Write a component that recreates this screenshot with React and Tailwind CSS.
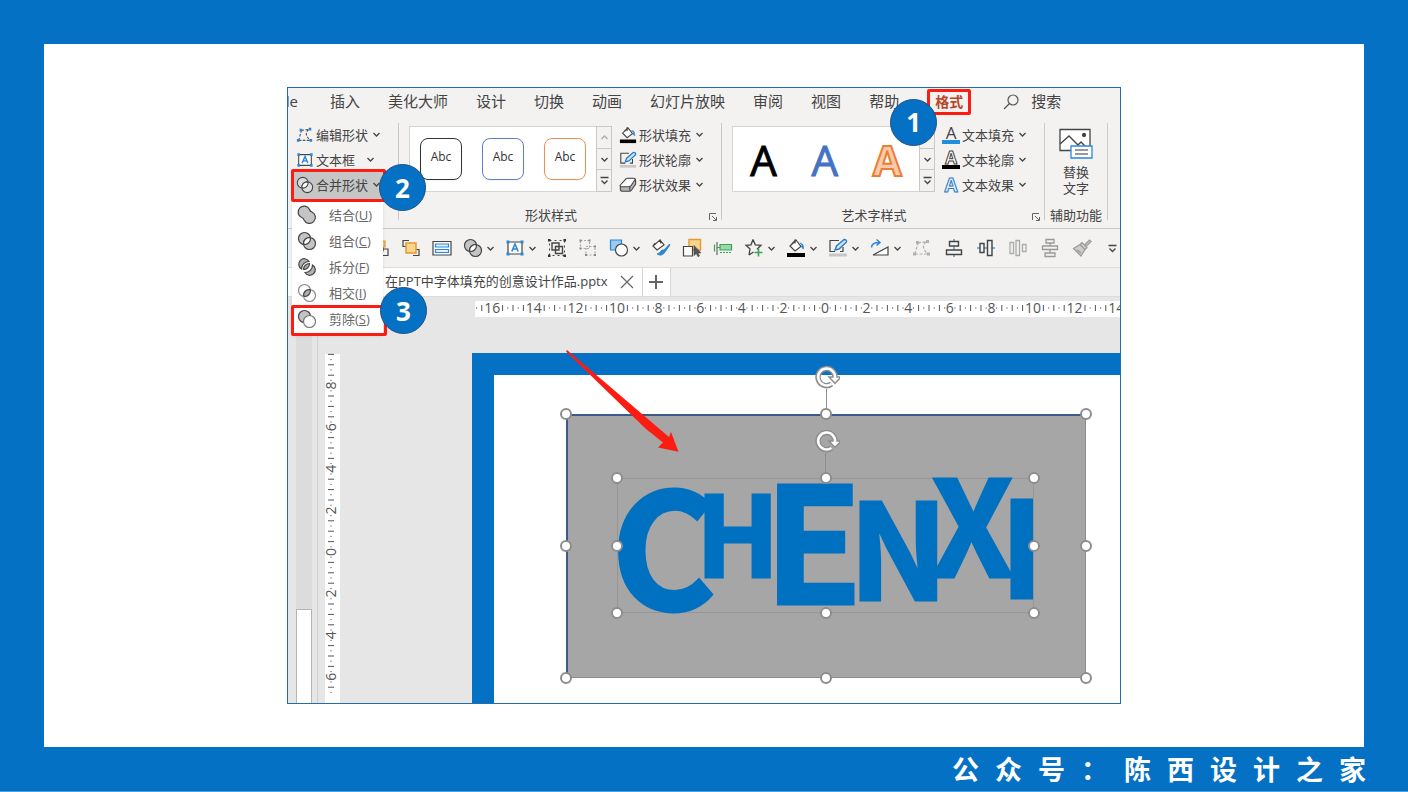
import React from 'react';
import clsx from 'clsx';

const tabs = ['插入', '美化大师', '设计', '切换', '动画', '幻灯片放映', '审阅', '视图', '帮助'];

const shapeStyles = ['border-[#333333]', 'border-[#5b80c9]', 'border-[#ec8f55]'];

const mergeItems = [
    { name: '结合', key: 'U', mode: 'union' },
    { name: '组合', key: 'C', mode: 'combine' },
    { name: '拆分', key: 'F', mode: 'fragment' },
    { name: '相交', key: 'I', mode: 'intersect' },
    { name: '剪除', key: 'S', mode: 'subtract' },
];

const Svg = ({ className = 'size-5', children }) => (
    <svg viewBox="0 0 20 20" className={clsx('shrink-0', className)} fill="none" stroke="#444" strokeWidth="1.2" aria-hidden="true">
        {children}
    </svg>
)

const Chevron = () => (
    <svg viewBox="0 0 9 9" className="size-[9px] shrink-0" fill="none" stroke="#444" strokeWidth="1.3" aria-hidden="true">
        <path d="M1.5 3l3 3 3-3" />
    </svg>
)

const MoreMark = () => (
    <svg viewBox="0 0 9 9" className="size-[9px] shrink-0" fill="none" stroke="#444" strokeWidth="1.3" aria-hidden="true">
        <path d="M0.5 1.5h8M1.5 4.5l3 3 3-3" />
    </svg>
)

const MergeIcon = ({ mode, className }) => (
    <Svg className={className}>
        {mode == 'union' && <path d="M12.5 4.5A6 6 0 1 0 4.5 12.5Q6.5 13 7 15A6 6 0 1 0 15 7Q13 6.5 12.5 4.5z" fill="#c4c4c4" />}
        {mode == 'combine' && <>
            <circle cx="7.5" cy="7.5" r="6" fill="#c4c4c4" />
            <circle cx="12.5" cy="12.5" r="6" fill="#c4c4c4" />
            <path d="M12.5 6.5A6 6 0 0 0 6.5 12.5L7.5 13.5A6 6 0 0 0 13.5 7.5z" fill="#fff" />
        </>}
        {mode == 'fragment' && <>
            <path d="M12 4.5A5.5 5.5 0 1 0 4.5 12A7.5 7.5 0 0 1 12 4.5z" fill="#b0b0b0" />
            <path d="M12.5 6.5A6 6 0 0 0 6.5 12.5A6 6 0 0 0 12.5 6.5z" fill="#b0b0b0" />
            <path d="M15.5 8A5.5 5.5 0 1 1 8 15.5A7.5 7.5 0 0 0 15.5 8z" fill="#b0b0b0" />
        </>}
        {mode == 'intersect' && <>
            <circle cx="7.5" cy="7.5" r="6" fill="#fff" stroke="#8a8a8a" />
            <circle cx="12.5" cy="12.5" r="6" fill="#fff" stroke="#8a8a8a" />
            <path d="M12.5 6.5A6 6 0 0 0 6.5 12.5L7.5 13.5A6 6 0 0 0 13.5 7.5z" fill="#b0b0b0" />
        </>}
        {mode == 'subtract' && <>
            <circle cx="7.5" cy="7.5" r="6" fill="#c4c4c4" />
            <circle cx="12.5" cy="12.5" r="6" fill="#fff" stroke="#777" />
        </>}
        {mode == 'outline' && <>
            <circle cx="7.5" cy="7.5" r="6" fill="#ddd" />
            <circle cx="12.5" cy="12.5" r="6" fill="#ddd" />
            <path d="M12.5 6.5A6 6 0 0 0 6.5 12.5L7.5 13.5A6 6 0 0 0 13.5 7.5z" fill="#fff" />
        </>}
    </Svg>
)

const EditPoints = ({ className, muted }) => (
    <Svg className={className}>
        <path d="M3 16L6 5M6 5q4-1 8-1M14 4q-6 5 2 12M3 16h13" stroke={muted ? '#b0b0b0' : '#555'} strokeDasharray="3 1.5" />
        <path d="M4 3h3v3H4zM14 2h3v3h-3zM1 14.5h3v3H1zM15 14.5h3v3h-3z" fill={muted ? '#b0b0b0' : '#2b88d8'} stroke="none" />
    </Svg>
)

const TextBox = ({ className }) => (
    <Svg className={className}>
        <path d="M3 4h14v12H3z" fill="#fff" />
        <path d="M6.8 13.5L10 6l3.2 7.5M8 11h4" stroke="#2b88d8" strokeWidth="1.6" />
        <path d="M1.5 2.5h3v3h-3zM15.5 2.5h3v3h-3zM1.5 14.5h3v3h-3zM15.5 14.5h3v3h-3z" fill="#2b88d8" stroke="none" />
    </Svg>
)

const Fill = ({ className }) => (
    <Svg className={className}>
        <path d="M10 2l5 6.5-6 4.5-5-5z" fill="#fff" />
        <path d="M9 1.5v4M10 2l-4 4" />
        <path d="M14 5q4 0 3.5 6q-2.5-1-1.5-4z" fill="#2b88d8" stroke="#2b88d8" strokeWidth="0.6" />
        <path d="M1 15h18v4H1z" fill="#000" stroke="none" />
    </Svg>
)

const Outline = ({ className }) => (
    <Svg className={className}>
        <path d="M11 2.5H2v11h5M15 9v4.5h-3" />
        <path d="M7 12l1.5-4L16 1.5q3 0 2.5 2.5L11 11z" fill="#cfe5f7" stroke="#2b7cc4" strokeWidth="1.4" />
        <path d="M1 15.5h18v3H1z" fill="#c8c8c8" stroke="none" />
    </Svg>
)

const Effect = ({ className }) => (
    <Svg className={className}>
        <path d="M8 3h8.5q2 0 2 2v4l-4.5 6.5q-1 1.5-2.5 1.5H4q-2.5 0-2.5-2v-3z" fill="#b5b5b5" />
        <path d="M7 4q1-1.5 2.5-1.5h7q2 0 1 2l-4 6q-1 1.5-2.5 1.5H3q-2.5 0-1.5-2z" fill="#fff" />
        <path d="M12 12v4.5" />
    </Svg>
)

const TextIcon = ({ kind }) => (
    <span className="flex w-[18px] shrink-0 flex-col items-center">
        <span className={clsx('text-[17px]',
            kind == 'fill' && 'leading-[14px] text-[#444]',
            kind == 'line' && 'leading-[14px] font-bold text-white [-webkit-text-stroke:1px_#444]',
            kind == 'effect' && 'text-[19px] leading-[18px] font-bold text-[#e3f1fb] [-webkit-text-stroke:1px_#2b7cc4]')}>A</span>
        {kind != 'effect' && <span className={clsx('h-1 w-full', kind == 'fill' ? 'bg-[#1e90dc]' : 'bg-black')} />}
    </span>
)

const toolsLeft = [
    { name: '下移一层', icon: <Svg><path d="M7 7h6v6H7z" fill="#fff" /><path d="M12 11h6v6.5h-6z" /><path d="M11 3h4v6h-4z" fill="#f9c36b" stroke="#e39a32" /></Svg> },
    { name: '上移一层', icon: <Svg><path d="M8 2.5H2v6h3M12 17.5h6v-6h-3" /><path d="M5 5h10v10H5z" fill="#fbd58c" stroke="#e39a32" strokeWidth="1.5" /></Svg> },
    { name: '选择窗格', icon: <Svg><path d="M1 3.5h18v13.5H1z" fill="#fff" /><path d="M3.5 6h13v3h-13zM3.5 11.5h13v3h-13z" stroke="#2b88d8" fill="#e5f2fc" /></Svg> },
    { name: '合并形状', menu: true, icon: <MergeIcon mode="combine" /> },
    { name: '文本框', menu: true, icon: <TextBox /> },
    { name: '组合', icon: <Svg><path d="M2.5 2.5h15v15h-15z" strokeDasharray="2 3" strokeWidth="1" /><path d="M5 5h7v7H5zM8.5 8.5h7v7h-7z" strokeWidth="1.4" /><path d="M1 1h2.5v2.5H1zM16.5 1H19v2.5h-2.5zM1 16.5h2.5V19H1zM16.5 16.5H19V19h-2.5z" fill="#333" stroke="none" /></Svg> },
    { name: '取消组合', icon: <Svg><path d="M2.5 2.5h9v8h-9zM8 8.5h9v8.5H8z" stroke="#aaa" strokeDasharray="2 1.5" /><path d="M1.5 1.5h2v2h-2zM10.5 1.5h2v2h-2zM1.5 9.5h2v2h-2zM16 7.5h2v2h-2zM7 16h2v2H7zM16 16h2v2h-2z" fill="#888" stroke="none" /></Svg> },
    { name: '形状', menu: true, icon: <Svg><path d="M1.5 2h11v10h-11z" fill="#9ccbf0" stroke="#2b88d8" /><circle cx="12.5" cy="12" r="6" fill="#fff" /></Svg> },
    { name: '格式刷', icon: <Svg><path d="M9 2l4 5-7 5-4-4zM9 1.5l1 4M4 5l-2 3" fill="#fff" /><path d="M18.5 6L13 12l-2 0q-2 3-5 4q5 3 8-2l5-7z" fill="#2b88d8" stroke="#2b7cc4" strokeWidth="0.8" /></Svg> },
    { name: '选择对象', icon: <Svg><path d="M7 1.5h11.5V12H7z" fill="#fbd58c" stroke="#e39a32" strokeWidth="1.4" /><path d="M1.5 8.5h9V18h-9z" fill="#fff" /><path d="M12 7.5v10l2.3-2 1.7 3.2 1.5-.8-1.5-3h3z" fill="#555" stroke="#444" strokeWidth="0.6" /></Svg> },
    { name: '对齐', icon: <Svg><path d="M4 4v13" stroke="#666" /><path d="M1.5 6.5v7M4 9.5h3" stroke="#3aa655" /><path d="M7 6.5h11.5V12H7z" fill="#9bd7a8" stroke="#3aa655" /><path d="M7 14.5h12" stroke="#3aa655" strokeDasharray="2 1" /></Svg> },
    { name: '插入形状', menu: true, icon: <Svg><path d="M9 1.5l2.3 5.3 5.7.5-4 4M5 17l1-6L2 7.3l5-.5L9 1.5M5 17L9.5 14" strokeWidth="1.3" /><path d="M14.5 10.5v8M10.5 14.5h8" stroke="#3aa655" strokeWidth="1.6" /></Svg> },
    { name: '形状填充', menu: true, icon: <Fill /> },
    { name: '形状轮廓', menu: true, icon: <Outline /> },
    { name: '旋转', menu: true, icon: <Svg><path d="M3 17h15V9z" fill="#fff" /><path d="M1.5 9.5q0-5 8-5M6.5 1.5l3.5 3-3.5 3" stroke="#2b88d8" strokeWidth="1.5" /></Svg> },
]

const toolsRight = [
    { name: '编辑顶点', icon: <EditPoints muted /> },
    { name: '水平居中', icon: <Svg><path d="M10 1v18" stroke="#2b88d8" /><path d="M5.5 3.5h9V8h-9zM2.5 12h15v4.5h-15z" fill="#f3f2f1" strokeWidth="1.4" /></Svg> },
    { name: '垂直居中', icon: <Svg><path d="M1 10h18" stroke="#2b88d8" /><path d="M4 5.5h4v9H4zM11.5 2.5h4.5v15h-4.5z" fill="#f3f2f1" strokeWidth="1.4" /></Svg> },
    { name: '横向分布', icon: <Svg><path d="M2 4.5h3.5v11H2zM8 2.5h3.5v15H8zM14.5 6.5H18v7h-3.5z" stroke="#aaa" strokeWidth="1.3" /></Svg> },
    { name: '纵向分布', icon: <Svg><path d="M6 1.5h8V5H6zM2.5 8h15v3.5h-15zM5 15h10v3.5H5zM10 5v3M10 11.5V15" stroke="#999" strokeWidth="1.3" /></Svg> },
    { name: '清除格式', icon: <Svg><path d="M1.5 10.5L8 6.5l5 5-4 6.5zM8 6.5l2-2 5 5-2 2M13 6.5l4.5-4.5 1.5 1.5L14.5 8M5 12l4 3" fill="#ccc" stroke="#999" /></Svg> },
]

const ToolButton = ({ name, menu, icon }) => (
    <button type="button" aria-label={name} className="flex items-center">
        {icon}
        {menu ? <span className="-mr-px ml-[3px] flex"><Chevron /></span> : <></>}
    </button>
)

const RibbonButton = ({ icon, children }) => (
    <button type="button" className="flex h-[25px] items-center whitespace-nowrap">
        {icon}
        <span className="mr-1 ml-0.5">{children}</span>
        <Chevron />
    </button>
)

const GalleryScroll = () => (
    <div className="flex w-4 flex-col border border-[#c8c8c8]">
        <button type="button" aria-label="上一行" className="flex flex-1 items-center justify-center opacity-40">
            <span className="flex rotate-180"><Chevron /></span>
        </button>
        <button type="button" aria-label="下一行" className="flex flex-1 items-center justify-center border-y border-[#c8c8c8]"><Chevron /></button>
        <button type="button" aria-label="其他" className="flex flex-1 items-center justify-center"><MoreMark /></button>
    </div>
)

const Caption = ({ children, launcher }) => (
    <div className="mt-2 flex h-5 items-center justify-center">
        <span className={clsx('flex-1 text-center whitespace-nowrap', launcher && 'pr-4')}>{children}</span>
        {launcher ? <button type="button" aria-label={`${children}设置`} className="mt-1">
            <svg viewBox="0 0 8 8" className="size-2" fill="none" stroke="#666" aria-hidden="true">
                <path d="M.5 7V.5H7M3 3l4 4M7.5 4v3.5H4" />
            </svg>
        </button> : <></>}
    </div>
)

const Divider = () => <div className="my-2 w-px shrink-0 bg-[#c9c9c9]" />

const Badge = ({ className, children }) => (
    <span className={clsx('absolute z-20 flex size-[47px] items-center justify-center rounded-full border border-[#1f4f86] bg-[#0571c4] text-[26px] leading-none font-bold text-white', className)}>
        {children}
    </span>
)

const MergeMenu = () => (
    <div className="absolute top-[30px] -left-1 z-10 w-[91px] bg-white pb-[3px] shadow">
        {mergeItems.map((itm, i) => (
            <button type="button" key={itm.key} className="relative flex h-[26px] w-full items-center gap-3 pl-[5px] text-left whitespace-nowrap text-[#666]">
                <MergeIcon mode={itm.mode} />
                <span>{itm.name}(<span className="underline">{itm.key}</span>)</span>
                {i == mergeItems.length - 1 && <>
                    <span className="absolute -top-px -right-1 -bottom-1 -left-px rounded-xs border-3 border-[#fb1c12]" />
                    <Badge className="-top-[19px] left-[88px]">3</Badge>
                </>}
            </button>
        ))}
    </div>
)

const Ribbon = () => (
    <div className="flex border-b border-[#c9c9c9] text-[13px] leading-5 text-[#444]">
        <div className="w-[110px] shrink-0 pt-[7px] pl-2">
            <RibbonButton icon={<EditPoints className="size-[18px]" />}>编辑形状</RibbonButton>
            <RibbonButton icon={<TextBox className="size-[18px]" />}>{'文本框\u00a0\u00a0'}</RibbonButton>
            <div className="relative">
                <span className="absolute -top-[3px] -bottom-[5px] -left-[5px] w-[95px] rounded-xs border-3 border-[#fb1c12] bg-[#c6c6c6]" />
                <div className="relative">
                    <RibbonButton icon={<MergeIcon mode="outline" className="size-[18px]" />}>合并形状</RibbonButton>
                </div>
                <MergeMenu />
                <Badge className="-top-2 left-[83px]">2</Badge>
            </div>
        </div>
        <Divider />
        <div className="w-[322px] shrink-0 pt-[7px] pr-1 pb-[3px] pl-2.5">
            <div className="flex gap-[7px]">
                <div className="mt-1 flex h-[66px]">
                    <div className="flex items-center gap-5 border-y border-l border-[#d5d5d5] bg-white px-[10px]">
                        {shapeStyles.map(itm => (
                            <button type="button" key={itm} className={clsx('flex size-[42px] items-center justify-center rounded-lg border pb-1 text-[12px] text-[#333] shadow-xs', itm)}>Abc</button>
                        ))}
                    </div>
                    <GalleryScroll />
                </div>
                <div>
                    <RibbonButton icon={<Fill className="size-[18px]" />}>形状填充</RibbonButton>
                    <RibbonButton icon={<Outline className="size-[18px]" />}>形状轮廓</RibbonButton>
                    <RibbonButton icon={<Effect className="size-[18px]" />}>形状效果</RibbonButton>
                </div>
            </div>
            <Caption launcher>形状样式</Caption>
        </div>
        <Divider />
        <div className="w-[322px] shrink-0 pt-[7px] pr-1 pb-[3px] pl-2.5">
            <div className="flex gap-[7px]">
                <div className="mt-1 flex h-[66px]">
                    <div className="flex w-[187px] items-center justify-around border-y border-l border-[#d5d5d5] bg-white pt-0.5 text-[42px] leading-none">
                        <button type="button" className="text-black [-webkit-text-stroke:1px_#000]">A</button>
                        <button type="button" className="text-[#4472c4] [-webkit-text-stroke:1px_#4472c4]">A</button>
                        <button type="button" className="font-bold text-[#f8cbad] [-webkit-text-stroke:2px_#ed7d31]">A</button>
                    </div>
                    <GalleryScroll />
                </div>
                <div>
                    <RibbonButton icon={<TextIcon kind="fill" />}>文本填充</RibbonButton>
                    <RibbonButton icon={<TextIcon kind="line" />}>文本轮廓</RibbonButton>
                    <RibbonButton icon={<TextIcon kind="effect" />}>文本效果</RibbonButton>
                </div>
            </div>
            <Caption launcher>艺术字样式</Caption>
        </div>
        <Divider />
        <div className="w-[62px] shrink-0 pt-[7px] pb-[3px]">
            <button type="button" className="flex h-[75px] w-full flex-col items-center pt-1.5 leading-4">
                <svg viewBox="0 0 34 32" className="mb-1 h-8 w-[34px]" fill="none" stroke="#444" strokeWidth="1.3" aria-hidden="true">
                    <path d="M1 1.5h30v21H1z" fill="#fff" />
                    <path d="M1 16l9-8 9 9 3-3 4 4" />
                    <circle cx="25" cy="7" r="1.5" fill="#444" />
                    <path d="M12 18h21v12H12z" fill="#fff" stroke="#2b88d8" />
                    <path d="M16 22h13M16 26h13" stroke="#777" />
                </svg>
                <span>替换</span>
                <span>文字</span>
            </button>
            <Caption>辅助功能</Caption>
        </div>
        <Divider />
    </div>
)

// one number every two units, a bar every half unit, a dot between bars
const STEP = 41.6;

const RulerMarks = ({ zero, from, to }) => {
    const marks = [];
    for (let n = from; n <= to; n++) {
        const base = zero + n * STEP;
        // the first step only brings the marks that lead up to the first number
        const first = n == from;
        if (!first) {
            marks.push(
                <text key={`t${n}`} x={base} y="12" textAnchor="middle" fontSize="14" fill="#555">{Math.abs(n * 2)}</text>
            );
        }
        for (let k = 1; k < 8; k++) {
            if (first && k < 5) continue;
            // two-digit numbers cover the dots beside them
            if (k == 1 && Math.abs(n) > 4) continue;
            if (k == 7 && Math.abs(n + 1) > 4) continue;
            const x = base + (k * STEP) / 8;
            marks.push(<path key={`m${n}-${k}`} d={k % 2 ? `M${x} 6v2` : `M${x} 4v6`} stroke={k % 2 ? '#999' : '#555'} />);
        }
    }
    return <>{marks}</>
}

const Handle = ({ className }) => (
    <span className={clsx('absolute size-3 -translate-x-1/2 -translate-y-1/2 rounded-full border-2 border-[#8d8d8d] bg-white', className)} />
)

const Handles = () => <>
    <Handle className="top-0 left-0" />
    <Handle className="top-0 left-1/2" />
    <Handle className="top-0 left-full" />
    <Handle className="top-1/2 left-0" />
    <Handle className="top-1/2 left-full" />
    <Handle className="top-full left-0" />
    <Handle className="top-full left-1/2" />
    <Handle className="top-full left-full" />
</>

const RotateHandle = () => (
    <span className="absolute bottom-full left-1/2 flex w-7 -translate-x-1/2 flex-col items-center">
        <svg viewBox="0 0 28 24" className="h-6 w-7 shrink-0" fill="none" aria-hidden="true">
            <path d="M19.500 19A8.500 8.500 0 1 1 23 12" stroke="#8d8d8d" strokeWidth="5.5" />
            <path d="M17 12h12l-6 6.500z" fill="#fff" stroke="#8d8d8d" strokeWidth="1.5" />
            <path d="M19.500 19A8.500 8.500 0 1 1 23 13.500" stroke="#fff" strokeWidth="2.5" />
        </svg>
        <span className="h-[25px] w-px bg-[#8d8d8d]" />
    </span>
)

const letters = [
    { ch: 'C', x: -6, y: 132, size: 160 },
    { ch: 'H', x: 79, y: 99, size: 110 },
    { ch: 'E', x: 147, y: 126, size: 160 },
    { ch: 'N', x: 232, y: 122, size: 132 },
    { ch: 'X', x: 314, y: 99, size: 132 },
    { ch: 'I', x: 383, y: 120, size: 132 },
]

const Slide = () => (
    <div className="absolute top-14 right-0 bottom-0 left-[184px] overflow-hidden bg-[#0571c4] pt-[22px] pl-[22px]">
        <div className="relative h-full bg-white">
            <div className="absolute top-[39px] left-[72px] h-[264px] w-[520px] bg-[#a6a6a6]">
                <span className="absolute inset-0 border-t-2 border-r border-b border-l-2 border-[#8d8d8d] border-t-[#3d5a8f] border-l-[#3d5a8f]" />
                <RotateHandle />
                <Handles />
                <div className="absolute top-16 left-[51px] h-[135px] w-[417px]">
                    <span className="absolute inset-0 border border-[#969696]" />
                    <svg className="absolute inset-0 size-full overflow-visible font-['Noto_Sans_CJK_SC',sans-serif]" fill="#0070c0" stroke="#0070c0" strokeWidth="3" fontWeight="700">
                        {letters.map(itm => <text key={itm.ch} x={itm.x} y={itm.y} fontSize={itm.size}>{itm.ch}</text>)}
                    </svg>
                    <RotateHandle />
                    <Handles />
                </div>
            </div>
        </div>
    </div>
)

const Workspace = () => (
    <div className="relative min-h-80 flex-1 overflow-hidden bg-[#e6e6e6]">
        <div className="absolute inset-y-0 left-2 w-4 bg-[#dcdcdc]" />
        <div className="absolute top-[312px] bottom-0 left-2 w-4 border border-b-0 border-[#b5b5b5] bg-white" />
        <div className="absolute inset-y-0 left-[29px] w-px bg-[#cfcfcf]" />
        <div className="absolute top-1 right-0 left-[187px] h-4 bg-white">
            <svg className="size-full overflow-visible">
                <RulerMarks zero={350} from={-9} to={7} />
            </svg>
        </div>
        <div className="absolute top-[57px] bottom-0 left-[37px] w-[15px] bg-white">
            <svg className="h-full w-[15px] overflow-visible">
                <g transform="translate(-1 198) rotate(-90)">
                    <RulerMarks zero={0} from={-4} to={4} />
                </g>
            </svg>
        </div>
        <Slide />
        <svg viewBox="0 0 113 102" className="absolute top-[53px] left-[278px] h-[102px] w-[113px]" fill="#fb1c12" aria-hidden="true">
            <path d="M1 0L103 87L105 82L112.500 101.700L92 97.500L97 92.500L80 79L0 1.500z" />
        </svg>
    </div>
)

const App = () => {
    return <>
        <div className="flex min-h-screen flex-col border-b border-[#4da3e6] bg-[#0571c4] px-11 pt-11 font-['Open_Sans','Noto_Sans_CJK_SC',sans-serif]">
            <main className="flex flex-1 flex-col bg-white py-[43px]">
                <div className="mx-auto flex w-full max-w-[834px] flex-1 flex-col overflow-hidden border border-[#1f6fae] bg-[#f3f2f1]">
                    <nav className="flex h-[27px] items-center gap-7 text-[15px] whitespace-nowrap text-[#444]">
                        <a href="#slide" className="flex w-3.5 justify-end overflow-hidden pr-1">de</a>
                        {tabs.map(itm => <a href="#tab" key={itm}>{itm}</a>)}
                        <a href="#format" className="relative flex h-[26px] w-11 items-center justify-center rounded-xs border-3 border-[#fb1c12] text-[14px] font-bold text-[#b7472a]">
                            格式
                            <Badge className="top-[7px] -left-10">1</Badge>
                        </a>
                        <button type="button" className="ml-1 flex items-center gap-3">
                            <svg viewBox="0 0 16 16" className="size-4" fill="none" stroke="#555" strokeWidth="1.2" aria-hidden="true">
                                <circle cx="10" cy="6" r="5" />
                                <path d="M6.5 9.5L1 15" />
                            </svg>
                            搜索
                        </button>
                    </nav>
                    <Ribbon />
                    <div className="flex h-[38px] items-center gap-[11px] pl-[82px]">
                        {toolsLeft.map(itm => <ToolButton key={itm.name} {...itm} />)}
                        <div className="flex items-center gap-3">
                            {toolsRight.map(itm => <ToolButton key={itm.name} {...itm} />)}
                            <button type="button" aria-label="自定义" className="ml-1"><MoreMark /></button>
                        </div>
                    </div>
                    <div className="flex h-[30px] items-stretch border-y border-[#dcdcdc] bg-[#f0f0f0] text-[13px] text-[#444]">
                        <div className="flex items-center gap-3 bg-white pr-2 pl-[97px] whitespace-nowrap">
                            在PPT中字体填充的创意设计作品.pptx
                            <button type="button" aria-label="关闭">
                                <svg viewBox="0 0 14 14" className="size-3.5" stroke="#666" strokeWidth="1.2" aria-hidden="true"><path d="M1 1l12 12M13 1L1 13" /></svg>
                            </button>
                        </div>
                        <button type="button" aria-label="新建" className="flex w-[29px] items-center justify-center border-x border-[#d5d5d5] bg-white">
                            <svg viewBox="0 0 14 14" className="size-3.5" stroke="#666" strokeWidth="2" aria-hidden="true"><path d="M7 0v14M0 7h14" /></svg>
                        </button>
                    </div>
                    <Workspace />
                </div>
            </main>
            <footer className="-mr-0.5 flex h-11 items-center justify-end gap-4 text-[27px] leading-none font-bold text-white">
                {[...'公众号：陈西设计之家'].map((ch, i) => <span key={i}>{ch}</span>)}
            </footer>
        </div>
    </>
}

export default App
